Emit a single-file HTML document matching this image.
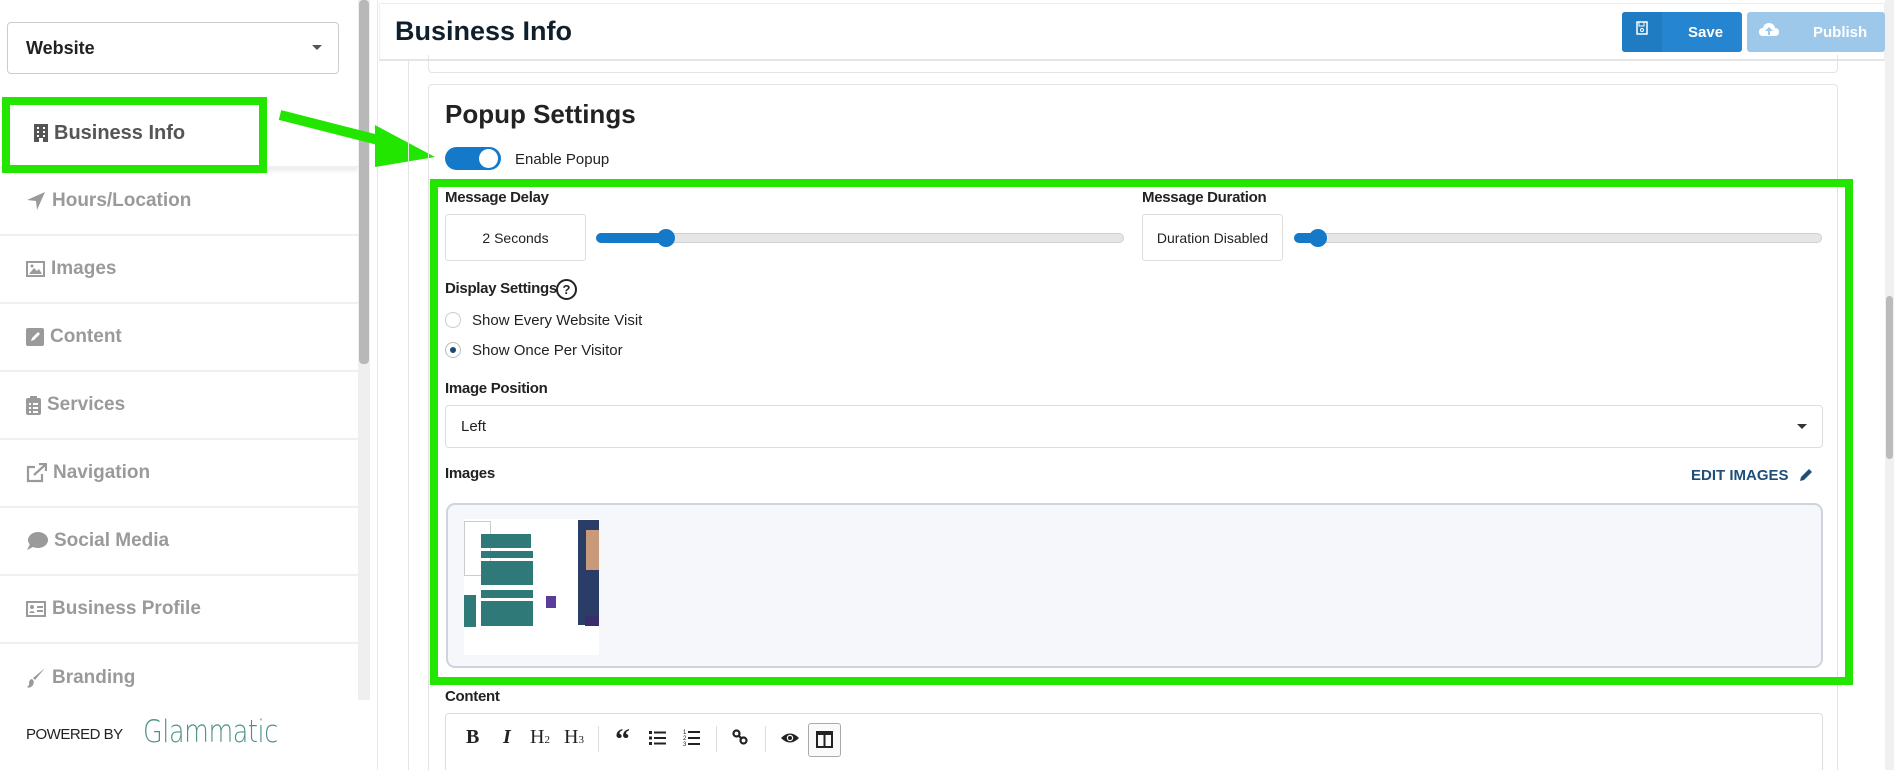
<!DOCTYPE html>
<html style="overflow:hidden;height:770px"><head><meta charset="utf-8"><style>
*{box-sizing:border-box;margin:0;padding:0}
body{width:1894px;height:770px;overflow:hidden;background:#fff;font-family:"Liberation Sans",sans-serif;position:relative;color:#222}
.a{position:absolute}
.nav{position:absolute;left:0;width:358px;height:68px;border-bottom:2px solid #f0f0f0;color:#9a9a9a;font-weight:bold;font-size:19px;display:flex;align-items:center;padding-left:26px}
.nav svg{margin-right:6px}
.lbl{position:absolute;font-size:15px;font-weight:bold;color:#222;letter-spacing:-0.3px}
.track{position:absolute;height:10px;border-radius:5px;background:#e6e6e6;border:1px solid #cfcfcf}
.fill{position:absolute;height:10px;border-radius:5px;background:#1479c9}
.thumb{position:absolute;width:18px;height:18px;border-radius:50%;background:#1479c9}
.vbox{position:absolute;border:1px solid #ddd;border-radius:3px;background:#fff;font-size:14px;display:flex;align-items:center;justify-content:center;color:#222}
.tb{position:absolute;top:726px;font-size:20px;color:#222}
.sep{position:absolute;top:726px;width:1px;height:26px;background:#ddd}
</style></head><body>
<!-- sidebar -->
<div class="a" style="left:7px;top:22px;width:332px;height:52px;border:1px solid #ccc;border-radius:4px"></div>
<div class="a" style="left:26px;top:38px;font-size:18px;font-weight:bold;color:#222">Website</div>
<div class="a" style="left:312px;top:45px;border-left:5px solid transparent;border-right:5px solid transparent;border-top:5px solid #555"></div>
<div class="a" style="left:0;top:100px;width:358px;height:2px;background:#f0f0f0"></div>
<div class="nav" style="top:100px;height:68px;color:#555;font-size:20px;padding-left:34px;background:#fff;box-shadow:0 3px 4px rgba(0,0,0,.08)"><svg width="14" height="18" viewBox="0 0 14 18"><rect x="0" y="0" width="14" height="18" fill="#555"/><g fill="#fff"><rect x="3" y="3" width="2" height="2"/><rect x="9" y="3" width="2" height="2"/><rect x="3" y="7" width="2" height="2"/><rect x="9" y="7" width="2" height="2"/><rect x="3" y="11" width="2" height="2"/><rect x="9" y="11" width="2" height="2"/><rect x="5" y="14" width="4" height="4"/></g></svg>Business Info</div>
<div class="nav" style="top:168px"><svg width="20" height="20" viewBox="0 0 20 20"><path d="M19 1 L1 9 L10 10 L11 19 Z" fill="#9a9a9a"/></svg>Hours/Location</div>
<div class="nav" style="top:236px"><svg width="19" height="16" viewBox="0 0 19 16"><rect x="1" y="1" width="17" height="14" fill="none" stroke="#9a9a9a" stroke-width="2"/><path d="M3 13 L8 7 L11 10 L13 8 L16 13Z" fill="#9a9a9a"/><circle cx="6" cy="5" r="1.5" fill="#9a9a9a"/></svg>Images</div>
<div class="nav" style="top:304px"><svg width="18" height="18" viewBox="0 0 18 18"><rect width="18" height="18" rx="2" fill="#9a9a9a"/><path d="M5 13 L6 10 L12 4 L14 6 L8 12Z" fill="#fff"/></svg>Content</div>
<div class="nav" style="top:372px"><svg width="15" height="19" viewBox="0 0 15 19"><rect y="2" width="15" height="17" rx="2" fill="#9a9a9a"/><rect x="4" y="0" width="7" height="4" fill="#9a9a9a"/><g fill="#fff"><rect x="3" y="7" width="2" height="2"/><rect x="7" y="7" width="5" height="2"/><rect x="3" y="11" width="2" height="2"/><rect x="7" y="11" width="5" height="2"/><rect x="3" y="15" width="2" height="2"/><rect x="7" y="15" width="5" height="2"/></g></svg>Services</div>
<div class="nav" style="top:440px"><svg width="21" height="20" viewBox="0 0 21 20"><path d="M9 4 H2 V18 H16 V11" fill="none" stroke="#9a9a9a" stroke-width="2.2"/><path d="M8 12 L19 2 M13 1 H20 V8" fill="none" stroke="#9a9a9a" stroke-width="2.2"/></svg>Navigation</div>
<div class="nav" style="top:508px"><svg width="22" height="20" viewBox="0 0 22 20"><ellipse cx="12" cy="9" rx="10" ry="8" fill="#9a9a9a"/><path d="M4 13 L1 19 L9 15Z" fill="#9a9a9a"/></svg>Social Media</div>
<div class="nav" style="top:576px"><svg width="20" height="16" viewBox="0 0 20 16"><rect x="1" y="1" width="18" height="14" fill="none" stroke="#9a9a9a" stroke-width="2"/><circle cx="6" cy="6" r="2" fill="#9a9a9a"/><path d="M3 12 Q6 8 9 12Z" fill="#9a9a9a"/><rect x="11" y="5" width="6" height="2" fill="#9a9a9a"/><rect x="11" y="9" width="6" height="2" fill="#9a9a9a"/></svg>Business Profile</div>
<div class="nav" style="top:644px;border-bottom:none"><svg width="20" height="22" viewBox="0 0 20 22"><path d="M19 1 L9 13 L7 11 Z" fill="#9a9a9a"/><path d="M6 12 Q9 14 7 18 Q4 22 1 20 Q4 18 3 15 Q4 12 6 12Z" fill="#9a9a9a"/></svg>Branding</div>
<div class="a" style="left:26px;top:726px;font-size:15px;color:#222;letter-spacing:-0.5px">POWERED BY</div>
<div class="a" style="left:143px;top:714px;font-size:31px;color:#4e918b;font-family:'DejaVu Sans',sans-serif;font-weight:200;letter-spacing:-0.5px;transform:scaleX(0.82);transform-origin:left">Glammatic</div>
<div class="a" style="left:358px;top:0;width:12px;height:700px;background:#efefef"></div>
<div class="a" style="left:359px;top:0;width:10px;height:364px;background:#b8b8b8;border-radius:4px"></div>
<div class="a" style="left:377px;top:0;width:1px;height:770px;background:#e8e8e8"></div>
<!-- green box + arrow -->
<div class="a" style="left:2px;top:97px;width:265px;height:76px;border:8px solid #22e600"></div>
<svg class="a" style="left:275px;top:105px" width="170" height="70" viewBox="0 0 170 70"><path d="M5 10 L115 38" stroke="#22e600" stroke-width="10"/><path d="M100 20 L160 52 L100 62Z" fill="#22e600"/></svg>
<!-- main header -->
<div class="a" style="left:379px;top:3px;width:1506px;height:58px;background:#fff;border:1px solid #eee;border-bottom:2px solid #e5e5e5"></div>
<div class="a" style="left:395px;top:16px;font-size:27px;font-weight:bold;color:#0f1f2c">Business Info</div>
<div class="a" style="left:1622px;top:12px;width:120px;height:40px;background:#2585d0;border-radius:3px"></div>
<div class="a" style="left:1622px;top:12px;width:40px;height:40px;background:#1f7bc2;border-radius:3px 0 0 3px"></div>
<svg class="a" style="left:1636px;top:21px" width="12" height="14" viewBox="0 0 12 14"><rect x="1" y="1" width="10" height="12" fill="none" stroke="#fff" stroke-width="1.5"/><rect x="3" y="1" width="5" height="4" fill="none" stroke="#fff"/><circle cx="6" cy="9" r="1.5" fill="none" stroke="#fff"/></svg>
<div class="a" style="left:1688px;top:24px;color:#fff;font-weight:bold;font-size:15px">Save</div>
<div class="a" style="left:1747px;top:12px;width:138px;height:40px;background:#9ec8ea;border-radius:3px"></div>
<svg class="a" style="left:1759px;top:22px" width="20" height="15" viewBox="0 0 20 15"><path d="M4 14 Q0 14 0 10 Q0 6 4 6 Q5 1 10 1 Q15 1 16 6 Q20 6 20 10 Q20 14 16 14Z" fill="#fff"/><path d="M10 5 L6 9 H9 V13 H11 V9 H14Z" fill="#9ec8ea"/></svg>
<div class="a" style="left:1813px;top:24px;color:#fff;font-weight:bold;font-size:15px">Publish</div>
<!-- right scrollbar -->
<div class="a" style="left:1885px;top:0;width:9px;height:770px;background:#f0f0f0"></div>
<div class="a" style="left:1886px;top:296px;width:7px;height:163px;background:#bbb;border-radius:4px"></div>
<!-- content area -->
<div class="a" style="left:408px;top:61px;width:1px;height:709px;background:#e5e5e5"></div>
<div class="a" style="left:428px;top:55px;width:1410px;height:18px;border:1px solid #e3e3e3;border-top:none;border-radius:0 0 4px 4px"></div>
<div class="a" style="left:428px;top:84px;width:1410px;height:686px;border:1px solid #e3e3e3;border-bottom:none;border-radius:4px 4px 0 0"></div>
<div class="a" style="left:445px;top:99px;font-size:26px;font-weight:bold;color:#222">Popup Settings</div>
<div class="a" style="left:445px;top:147px;width:56px;height:23px;border-radius:12px;background:#1479c9"></div>
<div class="a" style="left:479px;top:149px;width:19px;height:19px;border-radius:50%;background:#fff"></div>
<div class="a" style="left:515px;top:151px;font-size:15px;color:#222">Enable Popup</div>
<!-- inner -->
<div class="lbl" style="left:445px;top:189px">Message Delay</div>
<div class="vbox" style="left:445px;top:214px;width:141px;height:47px">2 Seconds</div>
<div class="track" style="left:596px;top:233px;width:528px"></div>
<div class="fill" style="left:596px;top:233px;width:72px"></div>
<div class="thumb" style="left:657px;top:229px"></div>
<div class="lbl" style="left:1142px;top:189px">Message Duration</div>
<div class="vbox" style="left:1142px;top:214px;width:141px;height:47px">Duration Disabled</div>
<div class="track" style="left:1294px;top:233px;width:528px"></div>
<div class="fill" style="left:1294px;top:233px;width:24px"></div>
<div class="thumb" style="left:1309px;top:229px"></div>
<div class="lbl" style="left:445px;top:280px">Display Settings</div>
<div class="a" style="left:556px;top:279px;width:21px;height:21px;border:2px solid #222;border-radius:50%;font-size:13px;font-weight:bold;text-align:center;line-height:17px">?</div>
<div class="a" style="left:445px;top:312px;width:16px;height:16px;border:1px solid #ccc;border-radius:50%"></div>
<div class="a" style="left:472px;top:312px;font-size:15px">Show Every Website Visit</div>
<div class="a" style="left:445px;top:342px;width:16px;height:16px;border:1px solid #bbb;border-radius:50%"></div>
<div class="a" style="left:450px;top:347px;width:6px;height:6px;background:#1b4a74;border-radius:50%"></div>
<div class="a" style="left:472px;top:342px;font-size:15px">Show Once Per Visitor</div>
<div class="lbl" style="left:445px;top:380px">Image Position</div>
<div class="a" style="left:445px;top:405px;width:1378px;height:43px;border:1px solid #ddd;border-radius:4px"></div>
<div class="a" style="left:461px;top:418px;font-size:15px">Left</div>
<div class="a" style="left:1797px;top:424px;border-left:5px solid transparent;border-right:5px solid transparent;border-top:5px solid #333"></div>
<div class="lbl" style="left:445px;top:465px">Images</div>
<div class="a" style="left:1691px;top:467px;font-size:15px;font-weight:bold;color:#1f4e79">EDIT IMAGES</div>
<svg class="a" style="left:1798px;top:467px" width="16" height="16" viewBox="0 0 16 16"><path d="M2 14 L3 10 L11 2 L14 5 L6 13Z" fill="#1f4e79"/></svg>
<div class="a" style="left:446px;top:503px;width:1377px;height:165px;background:#f5f7fa;border:2px solid #cdd4dd;border-radius:9px"></div>
<div class="a" style="left:464px;top:519px;width:135px;height:136px;background:#fff"></div>
<div class="a" style="left:464px;top:521px;width:27px;height:55px;border:1px solid #ccc;background:#fff"></div>
<div class="a" style="left:481px;top:534px;width:50px;height:14px;background:#2f7a78"></div>
<div class="a" style="left:481px;top:551px;width:52px;height:7px;background:#2f7a78"></div>
<div class="a" style="left:481px;top:561px;width:52px;height:24px;background:#2f7a78"></div>
<div class="a" style="left:481px;top:590px;width:52px;height:8px;background:#2f7a78"></div>
<div class="a" style="left:481px;top:601px;width:52px;height:25px;background:#2f7a78"></div>
<div class="a" style="left:464px;top:595px;width:12px;height:32px;background:#2f7a78"></div>
<div class="a" style="left:578px;top:520px;width:21px;height:105px;background:#2a3d66"></div>
<div class="a" style="left:586px;top:530px;width:13px;height:40px;background:#c99a7a"></div>
<div class="a" style="left:546px;top:596px;width:10px;height:12px;background:#5a3d9a"></div>
<div class="a" style="left:585px;top:616px;width:14px;height:10px;background:#3a2d6a"></div>
<!-- green inner box -->
<div class="a" style="left:430px;top:179px;width:1423px;height:506px;border:8px solid #22e600"></div>
<!-- content editor -->
<div class="lbl" style="left:445px;top:688px">Content</div>
<div class="a" style="left:445px;top:713px;width:1378px;height:57px;border:1px solid #ddd;border-bottom:none;border-radius:4px 4px 0 0"></div>
<div class="tb" style="left:466px;font-family:'Liberation Serif',serif;font-weight:bold">B</div>
<div class="tb" style="left:503px;font-family:'Liberation Serif',serif;font-style:italic;font-weight:bold">I</div>
<div class="tb" style="left:530px;font-family:'Liberation Serif',serif">H<span style="font-size:11px">2</span></div>
<div class="tb" style="left:564px;font-family:'Liberation Serif',serif">H<span style="font-size:11px">3</span></div>
<div class="sep" style="left:598px"></div>
<div class="tb" style="left:615px;font-family:'Liberation Serif',serif;font-weight:bold;font-size:30px;top:723px">“</div>
<svg class="a" style="left:649px;top:731px" width="17" height="14" viewBox="0 0 17 14"><g fill="#222"><rect x="0" y="0" width="3" height="3"/><rect x="0" y="5.5" width="3" height="3"/><rect x="0" y="11" width="3" height="3"/><rect x="5" y="0.5" width="12" height="2"/><rect x="5" y="6" width="12" height="2"/><rect x="5" y="11.5" width="12" height="2"/></g></svg>
<svg class="a" style="left:683px;top:728px" width="17" height="18" viewBox="0 0 17 18"><g fill="#222"><text x="0" y="6" font-size="6" font-family="Liberation Sans">1</text><text x="0" y="12" font-size="6" font-family="Liberation Sans">2</text><text x="0" y="18" font-size="6" font-family="Liberation Sans">3</text><rect x="5" y="3" width="12" height="2"/><rect x="5" y="9" width="12" height="2"/><rect x="5" y="15" width="12" height="2"/></g></svg>
<div class="sep" style="left:716px"></div>
<svg class="a" style="left:732px;top:729px" width="16" height="16" viewBox="0 0 16 16"><circle cx="4.5" cy="4.5" r="3" fill="none" stroke="#222" stroke-width="2.2"/><circle cx="11.5" cy="11.5" r="3" fill="none" stroke="#222" stroke-width="2.2"/><path d="M6.5 6.5 L9.5 9.5" stroke="#222" stroke-width="2.2"/></svg>
<div class="sep" style="left:765px"></div>
<svg class="a" style="left:781px;top:732px" width="18" height="12" viewBox="0 0 18 12"><path d="M0 6 Q9 -3 18 6 Q9 15 0 6Z" fill="#222"/><circle cx="9" cy="6" r="3.2" fill="#fff"/><circle cx="9" cy="6" r="2" fill="#222"/></svg>
<div class="a" style="left:808px;top:723px;width:33px;height:34px;border:1px solid #aaa;border-radius:3px;background:#fafafa"></div>
<svg class="a" style="left:816px;top:731px" width="17" height="17" viewBox="0 0 17 17"><rect x="1" y="1" width="15" height="15" fill="none" stroke="#222" stroke-width="2"/><rect x="7.5" y="1" width="2" height="15" fill="#222"/><rect x="1" y="1" width="15" height="3" fill="#222"/></svg>
</body></html>
